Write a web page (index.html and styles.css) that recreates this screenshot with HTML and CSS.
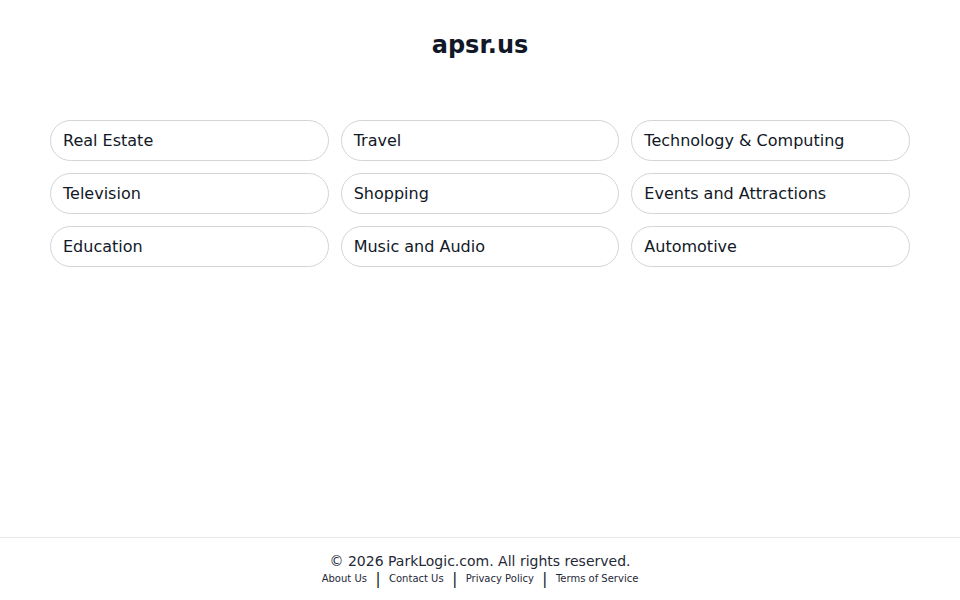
FILE: index.html
```html
<!DOCTYPE html>
<html lang="en">
<head>
    <meta charset="UTF-8">
    <meta name="viewport" content="width=device-width, initial-scale=1.0">
    <title>apsr.us</title>
    <link rel="stylesheet" href="styles.css">
</head>
<body>
    <div class="page">
        <header class="header">
            <h1>apsr.us</h1>
        </header>
        <main class="topics">
            <a class="topic" href="#">Real Estate</a>
            <a class="topic" href="#">Travel</a>
            <a class="topic" href="#">Technology &amp; Computing</a>
            <a class="topic" href="#">Television</a>
            <a class="topic" href="#">Shopping</a>
            <a class="topic" href="#">Events and Attractions</a>
            <a class="topic" href="#">Education</a>
            <a class="topic" href="#">Music and Audio</a>
            <a class="topic" href="#">Automotive</a>
        </main>
        <footer class="footer">
            <p class="copyright">&copy; 2026 ParkLogic.com. All rights reserved.</p>
            <nav class="footer-links">
                <a href="#">About Us</a>
                <span class="sep">|</span>
                <a href="#">Contact Us</a>
                <span class="sep">|</span>
                <a href="#">Privacy Policy</a>
                <span class="sep">|</span>
                <a href="#">Terms of Service</a>
            </nav>
        </footer>
    </div>
</body>
</html>
```

FILE: styles.css
```css
body {
    margin: 0;
    font-family: "DejaVu Sans", sans-serif;
    color: #111827;
    background: #fff;
}

.page {
    min-height: 100vh;
    display: flex;
    flex-direction: column;
}

.header {
    padding: 27px 0 0;
    text-align: center;
}

.header h1 {
    margin: 0;
    font-size: 24px;
    line-height: 36px;
    font-weight: bold;
    color: #111827;
}

.topics {
    flex: 1;
    display: grid;
    grid-template-columns: repeat(3, 1fr);
    grid-auto-rows: 41px;
    gap: 12px;
    align-content: start;
    padding: 57px 50px 0;
}

.topic {
    display: flex;
    align-items: center;
    padding: 0 12px;
    border: 1px solid #d4d4d8;
    border-radius: 21px;
    font-size: 16px;
    color: #111827;
    text-decoration: none;
    background: #fff;
}

.footer {
    border-top: 1px solid #e5e7eb;
    padding: 14px 0 13px;
    text-align: center;
}

.copyright {
    margin: 0;
    font-size: 14px;
    line-height: 18px;
    color: #1f2937;
}

.footer-links {
    display: flex;
    justify-content: center;
    align-items: center;
    margin-top: 1px;
    font-size: 10px;
    line-height: 16px;
}

.footer-links a {
    color: #1f2937;
    text-decoration: none;
}

.sep {
    margin: 0 8.5px;
    font-size: 15px;
    color: #111827;
}
```
